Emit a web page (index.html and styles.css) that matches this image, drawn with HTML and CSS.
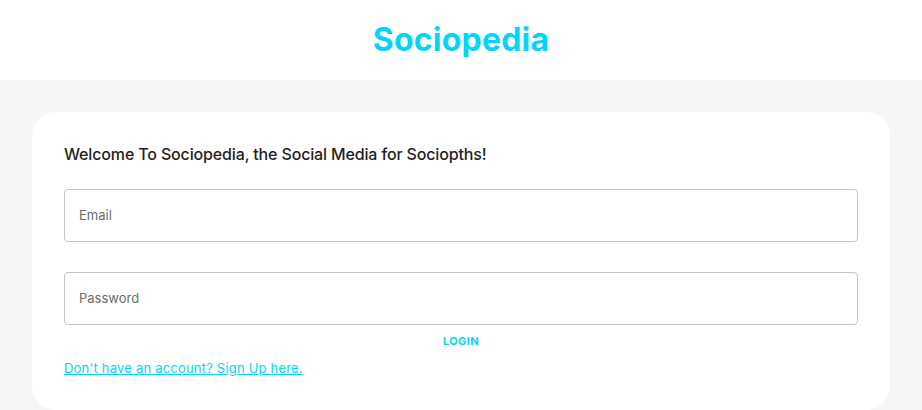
FILE: index.html
```html
<!DOCTYPE html>
<html>
<head>
<meta charset="utf-8">
<link rel="stylesheet" href="styles.css">
</head>
<body>
<header class="topbar">
  <h1 class="logo">Sociopedia</h1>
</header>
<main class="card">
  <h2 class="welcome">Welcome To Sociopedia, the Social Media for Sociopths!</h2>
  <form class="form">
    <div class="fields">
      <label class="field"><input type="text" placeholder="Email"></label>
      <label class="field"><input type="password" placeholder="Password"></label>
    </div>
    <button type="button" class="login">LOGIN</button>
    <a class="switch" href="#">Don't have an account? Sign Up here.</a>
  </form>
</main>
</body>
</html>
```
FILE: styles.css
```css
* { box-sizing: border-box; }
html, body { margin: 0; padding: 0; }
body {
  background: #f6f6f6;
  font-family: Inter, "Noto Sans", sans-serif;
  color: #333333;
}
.topbar {
  background: #ffffff;
  height: 80px;
  display: flex;
  align-items: center;
  justify-content: center;
}
.logo {
  margin: 0;
  font-size: 32px;
  font-weight: 700;
  color: #00d5fa;
  letter-spacing: 0.2px;
  line-height: 48px;
}
.card {
  width: 858px;
  margin: 32px auto 0;
  background: #ffffff;
  border-radius: 24px;
  padding: 32px 32px 34px;
}
.welcome {
  margin: 0 0 24px;
  font-size: 16px;
  font-weight: 500;
  line-height: 21px;
  letter-spacing: -0.15px;
  color: #1f1f1f;
}
.form { display: flex; flex-direction: column; }
.fields { display: flex; flex-direction: column; gap: 30px; }
.field { display: block; }
.field input {
  width: 100%;
  height: 53px;
  border: 1px solid #c4c4c4;
  border-radius: 4px;
  padding: 0 14px 2px;
  font-family: inherit;
  font-size: 13px;
  color: #333;
  outline: none;
}
.field input::placeholder { color: #6b6b6b; }
.login {
  align-self: center;
  margin: 3px 0 0;
  background: none;
  border: 0;
  padding: 6px 8px;
  font-family: inherit;
  font-size: 11px;
  font-weight: 700;
  letter-spacing: 0.4px;
  color: #00d5fa;
  cursor: pointer;
}
.switch {
  margin-top: 6px;
  font-size: 13px;
  letter-spacing: 0.2px;
  color: #00d5fa;
  text-decoration: underline;
  align-self: flex-start;
}
```
